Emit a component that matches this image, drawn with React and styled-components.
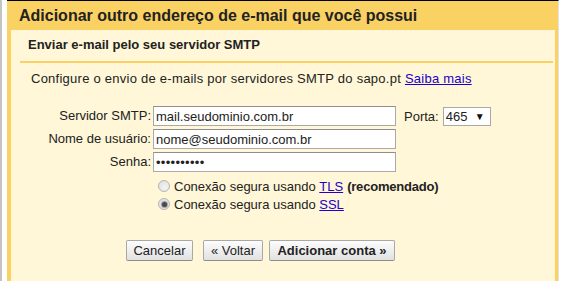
import React from 'react';
import styled, { createGlobalStyle } from 'styled-components';

const GlobalStyle = createGlobalStyle`
    html, body {
        margin: 0;
        padding: 0;
        background: #fff;
    }
    body {
        font-family: Arial, "Liberation Sans", sans-serif;
        font-size: 13px;
        color: #222;
    }
`;

const Frame = styled.div`
    display: flex;
    height: 281px;
    overflow: hidden;
    border-left: 2px solid #c4c4c4;
    padding-left: 5px;
`;

const Dialog = styled.div`
    width: 544px;
    background-color: #fad163;
    border-top: 1px solid #000;
    border-right: 1px solid #e2e2e2;
    padding: 0 3px 0 4px;
    display: flex;
    flex-direction: column;
`;

const Title = styled.h2`
    margin: 0;
    height: 29px;
    line-height: 29px;
    padding-left: 8px;
    font-size: 16px;
    font-weight: bold;
    color: #222;
`;

const Panel = styled.div`
    flex: 1;
    background-color: #fff7d7;
    padding-top: 7px;
`;

const SubTitle = styled.h3`
    margin: 0;
    padding-left: 17px;
    line-height: 16px;
    font-size: 13px;
    font-weight: bold;
`;

const Divider = styled.div`
    height: 2px;
    margin: 8px 2px 0 9px;
    background-color: #fad163;
`;

const Intro = styled.p`
    margin: 8px 0 0;
    padding-left: 20px;
    line-height: 16px;
    letter-spacing: 0.25px;
`;

const Link = styled.a`
    color: #2200cc;
    text-decoration: underline;
    cursor: pointer;
`;

const Form = styled.div`
    margin-top: 19px;
    display: grid;
    grid-template-columns: 140px 243px auto;
    column-gap: 2px;
    row-gap: 3px;
    align-items: center;
`;

const Label = styled.label`
    text-align: right;
    white-space: nowrap;
    line-height: 20px;
`;

const Field = styled.input`
    box-sizing: border-box;
    width: 243px;
    height: 20px;
    margin: 0;
    padding: 0 2px;
    border: 1px solid #a9a9a9;
    border-top-color: #8e8e8e;
    background: #fff;
    font-family: Arial, "Liberation Sans", sans-serif;
    font-size: 13px;
    letter-spacing: ${p => (p.$dots ? '0.3px' : '0')};
    color: #222;
    outline: none;
`;

const Port = styled.div`
    display: flex;
    align-items: center;
    gap: 4px;
    padding-left: 6px;
`;

const Select = styled.div`
    box-sizing: border-box;
    width: 48px;
    height: 19px;
    display: flex;
    align-items: center;
    justify-content: space-between;
    padding: 0 5px 0 2px;
    background: #fff;
    border: 1px solid #a9a9a9;
    font-size: 13px;

    span {
        font-size: 10px;
        color: #111;
    }
`;

const Options = styled.div`
    margin-top: 5px;
    padding-left: 147px;
`;

const Option = styled.label`
    display: flex;
    align-items: center;
    height: 18px;
    white-space: nowrap;
`;

const Radio = styled.span`
    box-sizing: border-box;
    width: 12px;
    height: 12px;
    margin-right: 4px;
    border-radius: 50%;
    border: 1px solid #b4b4b4;
    background: radial-gradient(circle at 60% 65%, #f4f4f4 0%, #dcdcdc 100%);
    display: flex;
    align-items: center;
    justify-content: center;

    &::after {
        content: '';
        width: 5px;
        height: 5px;
        border-radius: 50%;
        background: ${p => (p.$checked ? '#4a4a4a' : 'transparent')};
        box-shadow: ${p => (p.$checked ? '0 0 1px 1px #9a9a9a' : 'none')};
    }
`;

const Strong = styled.b`
    margin-left: 4px;
    letter-spacing: -0.2px;
`;

const Actions = styled.div`
    margin-top: 27px;
    padding-left: 115px;
    display: flex;
    gap: 6px;
`;

const Button = styled.button`
    box-sizing: border-box;
    width: ${p => p.$w}px;
    height: 21px;
    margin: 0 ${p => (p.$extra ? '4px' : '0')} 0 0;
    padding: 0;
    border: 1px solid #a8a8a8;
    border-bottom-color: #8c8c8c;
    border-radius: 2px;
    background: linear-gradient(#fdfdfd, #e1e1e1);
    font-family: Arial, "Liberation Sans", sans-serif;
    font-size: 13px;
    font-weight: ${p => (p.$primary ? 'bold' : 'normal')};
    color: #222;
    white-space: nowrap;
    cursor: pointer;
`;

export default function App() {
  return (
    <>
      <GlobalStyle />
      <Frame>
        <Dialog>
          <Title>Adicionar outro endereço de e-mail que você possui</Title>
          <Panel>
            <SubTitle>Enviar e-mail pelo seu servidor SMTP</SubTitle>
            <Divider />
            <Intro>
              Configure o envio de e-mails por servidores SMTP do sapo.pt <Link>Saiba mais</Link>
            </Intro>
            <Form>
              <Label>Servidor SMTP:</Label>
              <Field readOnly value='mail.seudominio.com.br' />
              <Port>
                Porta:
                <Select>465 <span>▼</span></Select>
              </Port>
              <Label>Nome de usuário:</Label>
              <Field readOnly value='nome@seudominio.com.br' />
              <div />
              <Label>Senha:</Label>
              <Field readOnly $dots value='••••••••••' />
              <div />
            </Form>
            <Options>
              <Option>
                <Radio />
                Conexão segura usando&nbsp;<Link>TLS</Link><Strong>(recomendado)</Strong>
              </Option>
              <Option>
                <Radio $checked />
                Conexão segura usando&nbsp;<Link>SSL</Link>
              </Option>
            </Options>
            <Actions>
              <Button $w={67} $extra>Cancelar</Button>
              <Button $w={60}>« Voltar</Button>
              <Button $w={126} $primary>Adicionar conta »</Button>
            </Actions>
          </Panel>
        </Dialog>
      </Frame>
    </>
  );
}
